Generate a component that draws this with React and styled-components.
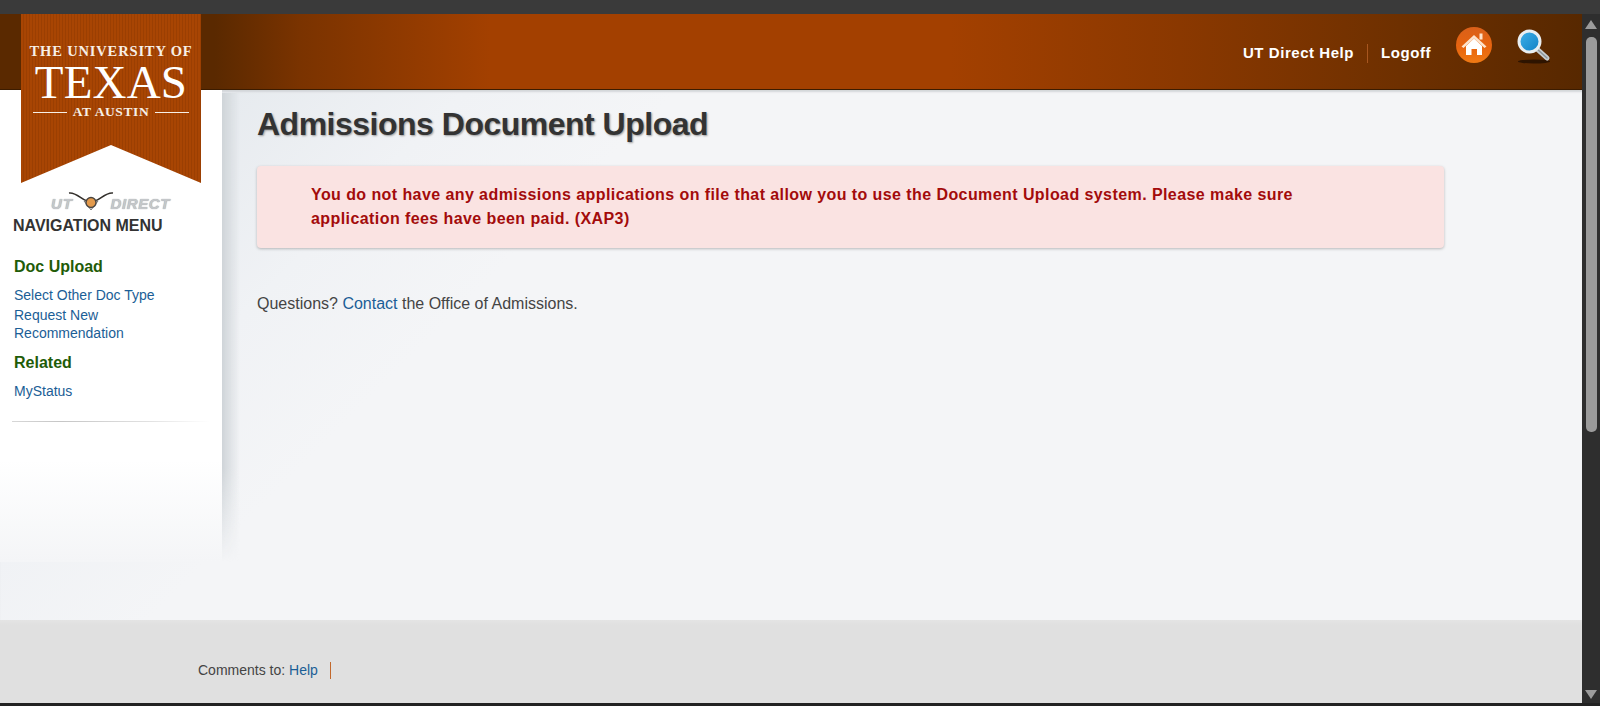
import React from 'react';
import styled, { createGlobalStyle } from 'styled-components';

const GlobalStyle = createGlobalStyle`
  html, body {
    margin: 0;
    padding: 0;
    height: 100%;
    overflow: hidden;
    font-family: "Liberation Sans", Arial, sans-serif;
  }
`;

const Page = styled.div`
  width: 1600px;
  height: 706px;
  display: flex;
  flex-direction: column;
  background: #2e2e2e;
  overflow: hidden;
`;

const BrowserStrip = styled.div`
  height: 14px;
  flex: none;
  background: #3a3a3a;
`;

const Viewport = styled.div`
  flex: 1;
  min-height: 0;
  display: flex;
`;

const Site = styled.div`
  position: relative;
  width: 1582px;
  height: 689px;
  flex: none;
  display: flex;
  flex-direction: column;
`;

const Header = styled.header`
  height: 76px;
  flex: none;
  box-sizing: border-box;
  padding-right: 31px;
  display: flex;
  align-items: flex-start;
  justify-content: flex-end;
  background: linear-gradient(90deg, #5a2900 0, #5a2900 215px, #7a3300 300px, #a34000 490px, #a34000 950px, #8a3800 1180px, #6e3000 1400px, #572800 1582px);
  border-bottom: 1px solid #3c1c00;
`;

const HeaderLink = styled.a`
  margin-top: 30px;
  color: #fff;
  font-size: 15px;
  line-height: 18px;
  font-weight: bold;
  letter-spacing: 0.55px;
`;

const HeaderDivider = styled.span`
  width: 1px;
  height: 19px;
  margin: 30px 13px 0;
  background: #a8561f;
`;

const HomeIcon = styled.svg`
  width: 38px;
  height: 38px;
  margin: 12px 0 0 24px;
`;

const SearchIcon = styled.svg`
  width: 34px;
  height: 36px;
  margin: 15px 0 0 24px;
`;

const Banner = styled.div`
  position: absolute;
  left: 21px;
  top: 0;
  width: 180px;
  height: 169px;
  box-sizing: border-box;
  padding-top: 29px;
  display: flex;
  flex-direction: column;
  align-items: center;
  color: #f7efe6;
  font-family: "Liberation Serif", "Times New Roman", serif;
  background: repeating-linear-gradient(90deg, #a84503 0, #a84503 2px, #9b3f02 2px, #9b3f02 3px);
  clip-path: polygon(0 0, 100% 0, 100% 100%, 50% 131px, 0 100%);
`;

const BannerTop = styled.div`
  font-size: 14.5px;
  line-height: 16px;
  font-weight: bold;
  letter-spacing: 0.85px;
  white-space: nowrap;
`;

const BannerMain = styled.div`
  font-size: 47px;
  line-height: 44px;
  margin-top: 1px;
  letter-spacing: 0.2px;
  color: #fff;
`;

const BannerBottom = styled.div`
  width: 156px;
  display: flex;
  align-items: center;
  gap: 6px;
  font-size: 13.5px;
  line-height: 16px;
  font-weight: bold;
  letter-spacing: 0.6px;
  white-space: nowrap;
  &::before,
  &::after {
    content: '';
    flex: 1;
    height: 1px;
    background: #f7efe6;
  }
`;

const Body = styled.div`
  flex: 1;
  min-height: 0;
  display: flex;
  background:
    linear-gradient(135deg, #d8dfe5 0, #e7ebef 170px, #f0f2f5 330px, #f4f5f7 480px, #f4f5f7 100%);
  box-shadow: inset 0 3px 2px -1px #d3d6d9;
`;

const Sidebar = styled.aside`
  position: relative;
  width: 222px;
  height: 472px;
  flex: none;
  box-sizing: border-box;
  padding: 113px 0 0 14px;
  background: linear-gradient(180deg, #fff 0, #fff 370px, #f4f5f7 100%);
  &::after {
    content: '';
    position: absolute;
    left: 100%;
    top: 3px;
    bottom: 0;
    width: 18px;
    background: linear-gradient(90deg, #cfd4d8, rgba(215, 219, 223, 0));
    -webkit-mask-image: linear-gradient(180deg, #000 0, #000 80%, transparent 100%);
    mask-image: linear-gradient(180deg, #000 0, #000 80%, transparent 100%);
  }
`;

const DirectLogo = styled.div`
  position: relative;
  width: 120px;
  margin: -13px 0 0 37px;
  height: 22px;
  display: flex;
  align-items: flex-end;
  justify-content: space-between;
  color: #c4c7ca;
  font-size: 15px;
  line-height: 16px;
  font-weight: bold;
  font-style: italic;
  text-shadow: 0 0 1px #8e9194;
`;

const DirectHorns = styled.svg`
  position: absolute;
  left: 17px;
  top: 0;
  width: 46px;
  height: 20px;
`;

const DirectUt = styled.span`
  letter-spacing: 1px;
`;

const DirectWord = styled.span`
  letter-spacing: 0.6px;
  margin-right: 1px;
`;

const NavTitle = styled.div`
  margin: 4px 0 0 -1px;
  color: #333;
  font-size: 16px;
  line-height: 19px;
  font-weight: bold;
  white-space: nowrap;
`;

const NavGroup = styled.div`
  margin-top: ${p => p.$top}px;
  color: #1f5c08;
  font-size: 16px;
  line-height: 19px;
  font-weight: bold;
`;

const NavLink = styled.a`
  display: block;
  width: 170px;
  margin-top: ${p => p.$top}px;
  color: #1b5e96;
  font-size: 14px;
  line-height: 18px;
`;

const NavRule = styled.div`
  width: 198px;
  height: 1px;
  margin: 21px 0 0 -2px;
  background: linear-gradient(90deg, #d7d7d7, #c6c6c6 25%, #e2e2e2 70%, rgba(255, 255, 255, 0));
`;

const Content = styled.main`
  flex: 1;
  min-width: 0;
  box-sizing: border-box;
  padding: 15px 0 0 35px;
`;

const Title = styled.h1`
  margin: 0;
  color: #333;
  font-size: 32px;
  line-height: 38px;
  font-weight: bold;
  letter-spacing: -0.5px;
  text-shadow: 1px 1px 2px #9a9a9a;
`;

const Alert = styled.div`
  width: 1187px;
  height: 82px;
  margin-top: 23px;
  box-sizing: border-box;
  padding: 17px 60px 0 54px;
  border-radius: 4px;
  background: #fae3e2;
  box-shadow: 0 1px 3px rgba(0, 0, 0, 0.25);
  color: #a30b0b;
  font-size: 16px;
  line-height: 24px;
  font-weight: bold;
  letter-spacing: 0.42px;
`;

const Question = styled.p`
  margin: 46px 0 0;
  color: #444;
  font-size: 16px;
  line-height: 20px;
`;

const TextLink = styled.a`
  color: #1b5e96;
`;

const Footer = styled.footer`
  height: 83px;
  flex: none;
  box-sizing: border-box;
  padding: 40px 0 0 198px;
  display: flex;
  align-items: flex-start;
  color: #444;
  font-size: 14px;
  line-height: 20px;
  background: linear-gradient(180deg, #e4e4e4 0, #e0e0e0 5px, #e0e0e0 100%);
`;

const FooterBar = styled.span`
  width: 1px;
  height: 17px;
  margin: 2px 0 0 12px;
  background: #c2682c;
`;

const Scrollbar = styled.div`
  width: 18px;
  flex: none;
  display: flex;
  flex-direction: column;
  align-items: center;
  background: #2e2e2e;
`;

const ScrollArrow = styled.svg`
  width: 12px;
  height: 9px;
  flex: none;
  margin-top: ${p => p.$top}px;
`;

const ScrollThumb = styled.div`
  width: 11px;
  height: 395px;
  margin-top: 8px;
  border-radius: 5px;
  background: #9b9b9b;
`;

const ScrollGap = styled.div`
  flex: 1;
`;

const BottomEdge = styled.div`
  height: 3px;
  flex: none;
  background: #222;
`;

const App = () => {
  return (
    <Page>
      <GlobalStyle />
      <BrowserStrip />
      <Viewport>
        <Site>
          <Header>
            <HeaderLink>UT Direct Help</HeaderLink>
            <HeaderDivider />
            <HeaderLink>Logoff</HeaderLink>
            <HomeIcon viewBox="0 0 38 38">
              <defs>
                <linearGradient id="homeFill" x1="0" y1="0" x2="0" y2="1">
                  <stop offset="0" stopColor="#d9601a" />
                  <stop offset="0.55" stopColor="#e8640f" />
                  <stop offset="1" stopColor="#f07a14" />
                </linearGradient>
              </defs>
              <circle cx="19" cy="19" r="18" fill="url(#homeFill)" />
              <path d="M11 20 L19 12.5 L27 20 V29 H22 V23 H16.5 V29 H11 Z" fill="#fff" />
              <path d="M6.5 20.5 L19 9 L31.5 20.5 L29.5 22 L19 12.5 L8.5 22 Z" fill="#fde3cc" />
              <rect x="24.5" y="7.5" width="3" height="6" fill="#fde3cc" />
            </HomeIcon>
            <SearchIcon viewBox="0 0 34 36">
              <defs>
                <linearGradient id="lensFill" x1="0" y1="0" x2="1" y2="1">
                  <stop offset="0" stopColor="#3fb1ea" />
                  <stop offset="1" stopColor="#0f7fc4" />
                </linearGradient>
              </defs>
              <ellipse cx="17" cy="32.5" rx="16" ry="2" fill="#2e1400" />
              <path d="M20 20 L30 29" stroke="#c8cdd0" strokeWidth="5" strokeLinecap="round" />
              <path d="M20 20 L30 29" stroke="#8d9599" strokeWidth="1.5" strokeLinecap="round" />
              <circle cx="12.5" cy="12.5" r="10.5" fill="url(#lensFill)" stroke="#e9eef1" strokeWidth="3" />
            </SearchIcon>
          </Header>
          <Body>
            <Sidebar>
              <DirectLogo>
                <DirectUt>UT</DirectUt>
                <DirectWord>DIRECT</DirectWord>
                <DirectHorns viewBox="0 0 46 20">
                  <path d="M1 3 C8 2 13 9 19 11 L27 11 C33 9 38 2 45 3" fill="none" stroke="#33302c" strokeWidth="1.6" />
                  <path d="M16 11 H30 L23 20 Z" fill="#fff" stroke="#777" strokeWidth="1" />
                  <circle cx="23" cy="12.5" r="5" fill="#e39a4c" stroke="#4a4540" strokeWidth="1.4" />
                </DirectHorns>
              </DirectLogo>
              <NavTitle>NAVIGATION MENU</NavTitle>
              <NavGroup $top={22}>Doc Upload</NavGroup>
              <NavLink $top={10}>Select Other Doc Type</NavLink>
              <NavLink $top={2}>Request New Recommendation</NavLink>
              <NavGroup $top={11}>Related</NavGroup>
              <NavLink $top={10}>MyStatus</NavLink>
              <NavRule />
            </Sidebar>
            <Content>
              <Title>Admissions Document Upload</Title>
              <Alert>
                You do not have any admissions applications on file that allow you to use the Document Upload system. Please make sure application fees have been paid. (XAP3)
              </Alert>
              <Question>
                Questions? <TextLink>Contact</TextLink> the Office of Admissions.
              </Question>
            </Content>
          </Body>
          <Footer>
            <span>
              Comments to: <TextLink>Help</TextLink>
            </span>
            <FooterBar />
          </Footer>
          <Banner>
            <BannerTop>THE UNIVERSITY OF</BannerTop>
            <BannerMain>TEXAS</BannerMain>
            <BannerBottom>AT AUSTIN</BannerBottom>
          </Banner>
        </Site>
        <Scrollbar>
          <ScrollArrow viewBox="0 0 12 9" $top={6}>
            <path d="M6 0 L12 9 H0 Z" fill="#9b9b9b" />
          </ScrollArrow>
          <ScrollThumb />
          <ScrollGap />
          <ScrollArrow viewBox="0 0 12 9" $top={0}>
            <path d="M0 0 H12 L6 9 Z" fill="#9b9b9b" />
          </ScrollArrow>
          <ScrollGap style={{ flex: '0 0 4px' }} />
        </Scrollbar>
      </Viewport>
      <BottomEdge />
    </Page>
  );
};

export default App;
